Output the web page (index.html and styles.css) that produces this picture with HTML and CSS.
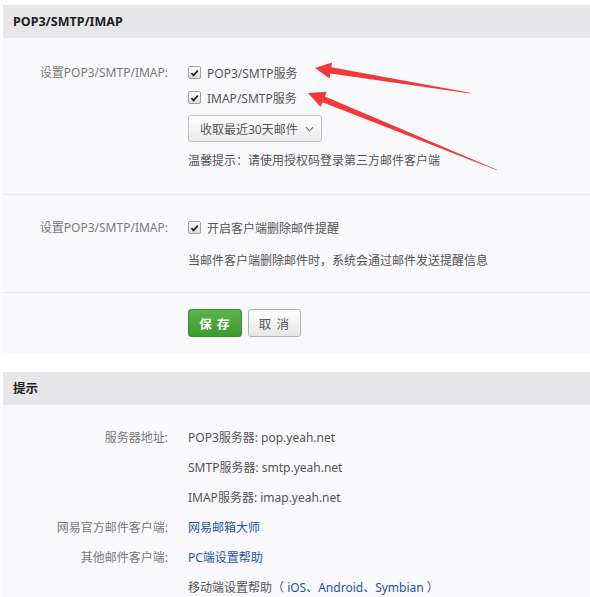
FILE: index.html
```html
<!DOCTYPE html>
<html lang="zh-CN">
<head>
<meta charset="utf-8">
<title>POP3/SMTP/IMAP</title>
<link rel="stylesheet" href="styles.css">
</head>
<body>
<div class="page">
  <div class="panel">
    <div class="panel-hd">POP3/SMTP/IMAP</div>
    <div class="section s1">
      <div class="field">
        <div class="label">设置POP3/SMTP/IMAP:</div>
        <div class="ctrl">
          <div class="check"><span class="cb"><svg viewBox="0 0 12 12" width="12" height="12"><path d="M2.6 6.2 L5 8.6 L9.6 3.4" fill="none" stroke="#222" stroke-width="1.9"/></svg></span>POP3/SMTP服务</div>
          <div class="check"><span class="cb"><svg viewBox="0 0 12 12" width="12" height="12"><path d="M2.6 6.2 L5 8.6 L9.6 3.4" fill="none" stroke="#222" stroke-width="1.9"/></svg></span>IMAP/SMTP服务</div>
          <div class="select">收取最近30天邮件<svg class="chev" viewBox="0 0 10 6" width="9" height="6"><path d="M1 1 L5 5 L9 1" fill="none" stroke="#666" stroke-width="1.2"/></svg></div>
          <div class="tip">温馨提示：请使用授权码登录第三方邮件客户端</div>
        </div>
      </div>
    </div>
    <div class="section s2">
      <div class="field">
        <div class="label">设置POP3/SMTP/IMAP:</div>
        <div class="ctrl">
          <div class="check"><span class="cb"><svg viewBox="0 0 12 12" width="12" height="12"><path d="M2.6 6.2 L5 8.6 L9.6 3.4" fill="none" stroke="#222" stroke-width="1.9"/></svg></span>开启客户端删除邮件提醒</div>
          <div class="note">当邮件客户端删除邮件时，系统会通过邮件发送提醒信息</div>
        </div>
      </div>
    </div>
    <div class="section s3">
      <div class="field">
        <div class="label"></div>
        <div class="ctrl btns">
          <span class="btn btn-save">保 存</span>
          <span class="btn btn-cancel">取 消</span>
        </div>
      </div>
    </div>
  </div>

  <div class="panel panel2">
    <div class="panel-hd">提示</div>
    <div class="section s4">
      <div class="row">
        <div class="label">服务器地址:</div>
        <div class="vals">
          <div>POP3服务器: pop.yeah.net</div>
          <div>SMTP服务器: smtp.yeah.net</div>
          <div>IMAP服务器: imap.yeah.net</div>
        </div>
      </div>
      <div class="row">
        <div class="label">网易官方邮件客户端:</div>
        <div class="vals"><div><a class="lnk">网易邮箱大师</a></div></div>
      </div>
      <div class="row">
        <div class="label">其他邮件客户端:</div>
        <div class="vals">
          <div><a class="lnk">PC端设置帮助</a></div>
          <div>移动端设置帮助（ <a class="lnk">iOS</a>、<a class="lnk">Android</a>、<a class="lnk">Symbian</a> ）</div>
        </div>
      </div>
    </div>
  </div>
</div>

<svg class="arrows" width="590" height="597" viewBox="0 0 590 597">
  <polygon fill="#f0393b" points="315,68 332.1,62.4 331.3,67.3 470,92.8 470,93.4 330.3,73.6 329.5,78.6"/>
  <polygon fill="#f0393b" points="308,93 326.9,91.8 324.9,96.5 497,169.7 496.8,170.3 322.5,102.3 320.6,107"/>
</svg>
</body>
</html>
```

FILE: styles.css
```css
html, body {
  margin: 0;
  padding: 0;
  background: #ffffff;
  overflow: hidden;
}

body {
  font-family: "Noto Sans", "Noto Sans CJK SC", sans-serif;
  font-size: 12px;
  color: #555;
  position: relative;
  width: 590px;
  height: 597px;
}

.page {
  padding: 5px 0 0 3px;
}

.panel {
  background: #f9f8fb;
}

.panel2 {
  margin-top: 19px;
}

.panel-hd {
  height: 33px;
  line-height: 33px;
  background: #e7e6e9;
  padding-left: 10px;
  font-weight: bold;
  font-size: 12.5px;
  color: #222;
}

.section {
  border-bottom: 1px solid #ebeaee;
}

.s1 {
  padding: 22px 0 23px;
}

.s2 {
  padding: 20px 0 21px;
}

.s3 {
  border-bottom: none;
  padding: 16px 0 16px;
}

.s4 {
  border-bottom: none;
  padding: 18px 0 20px;
}

.field,
.row {
  display: flex;
  align-items: flex-start;
}

.label {
  width: 165px;
  flex: none;
  text-align: right;
  color: #7a7a7a;
  line-height: 25px;
}

.ctrl {
  margin-left: 20px;
  display: flex;
  flex-direction: column;
  align-items: flex-start;
}

.check {
  display: flex;
  align-items: center;
  height: 25px;
  color: #555;
}

.cb {
  width: 11px;
  height: 11px;
  border: 1px solid #a0a0a0;
  border-radius: 2px;
  background: linear-gradient(#ffffff, #dcdcdc);
  margin-right: 6px;
  display: flex;
  align-items: center;
  justify-content: center;
}

.cb svg {
  display: block;
}

.select {
  margin-top: 5px;
  height: 25px;
  border: 1px solid #c2c2c2;
  border-radius: 3px;
  background: linear-gradient(#ffffff, #ebebeb);
  display: flex;
  align-items: center;
  padding-left: 11px;
  width: 121px;
  color: #555;
}

.chev {
  margin-left: 7px;
}

.tip {
  margin-top: 9px;
  line-height: 20px;
  color: #555;
}

.note {
  margin-top: 11px;
  line-height: 20px;
  color: #555;
}

.btns {
  flex-direction: row;
  gap: 6px;
}

.btn {
  display: flex;
  align-items: center;
  justify-content: center;
  height: 26px;
  border-radius: 3px;
  font-size: 12.5px;
  letter-spacing: 1px;
}

.btn-save {
  width: 52px;
  border: 1px solid #3a8f2e;
  background: linear-gradient(#5cb44b, #3c9b30);
  color: #fff;
  font-weight: bold;
}

.btn-cancel {
  width: 51px;
  border: 1px solid #b3b3b3;
  background: linear-gradient(#ffffff, #e6e6e6);
  color: #555;
}

.row .label {
  line-height: 30px;
}

.vals {
  margin-left: 20px;
  line-height: 30px;
  color: #555;
}

.lnk {
  color: #1e55a3;
  text-decoration: none;
}

.arrows {
  position: absolute;
  left: 0;
  top: 0;
  pointer-events: none;
}
```
